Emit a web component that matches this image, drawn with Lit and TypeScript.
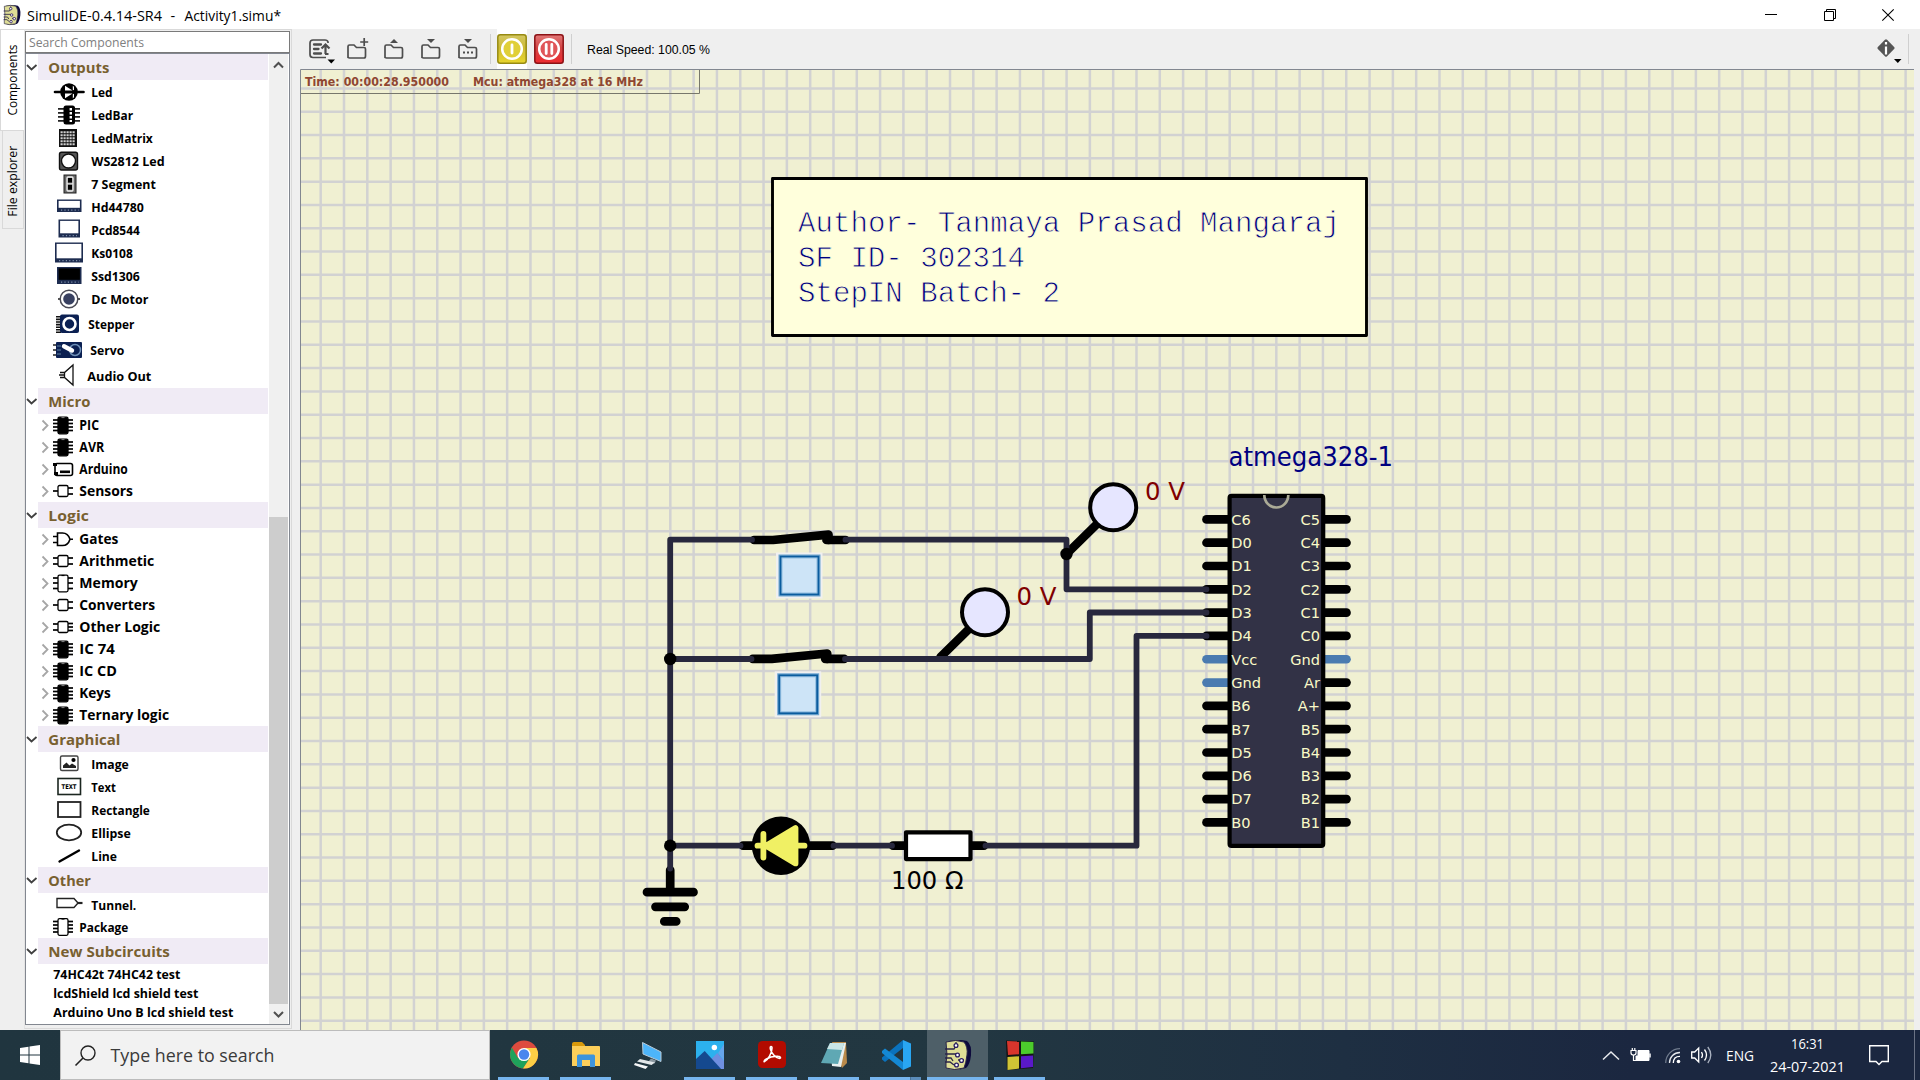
import { LitElement, html, svg, css, TemplateResult } from "lit";
import { customElement } from "lit/decorators.js";

type Icon = TemplateResult;

/* Single line of text with a fixed advance width. */
const label = (text: string, width: number, cls = "") => html`<svg
  class="label ${cls}" width=${width} height="16"><text x="-0.7" y=${cls === "big" ? 13.8 : cls === "node" ? 13.2 : 12.6}
  textLength=${width} lengthAdjust="spacingAndGlyphs">${text}</text></svg>`;

const chip = (hollow: boolean, left: number[], right: number[], tall = true): Icon => svg`
  <rect x="5" y=${tall ? 2.7 : 5} width="10" height=${tall ? 16.6 : 11} rx="1.5"
    fill=${hollow ? "#fff" : "#000"} stroke="#000" stroke-width="1.3"/>
  ${left.map((y) => svg`<path d="M0 ${y}H5" stroke="#000" stroke-width="1.7"/>`)}
  ${right.map((y) => svg`<path d="M15 ${y}H20" stroke="#000" stroke-width="1.7"/>`)}
  ${tall ? svg`<path d="M8.5 2.4h3v1.2h-3z" fill=${hollow ? "#000" : "#777"}/>` : ""}`;
const P4 = [5.5, 9, 12.5, 16];
const icChip = chip(false, P4, P4);

const lcd = (x: number, y: number, w: number, h: number, fill = "#fff"): Icon => svg`
  <rect x=${x} y=${y} width=${w} height=${h} fill="#1d2c50"/>
  <rect x=${x + 1.6} y=${y + 1.4} width=${w - 3.2} height=${h - 5.6} fill=${fill}/>
  <path d="M${x + 4} ${y + h - 1.8}H${x + w - 3}" stroke="#7f90ab" stroke-width="1.2" stroke-dasharray="1.2 2.2"/>`;

const icons: Record<string, Icon> = {
  led: svg`<path d="M2 11H30.500" stroke="#000" stroke-width="2.600" stroke-linecap="round"/><circle cx="16" cy="11" r="8.800"/>
    <path d="M12 4.800v4.700h7.500zM12 17.200v-4.700h7.500zM19.800 4.800l1.200.9v3.600l-1.200-.6zM19.800 17.200l1.200-.9v-3.600l-1.200.6z" fill="#fff"/>`,
  ledbar: svg`<path d="M5 4.8H27M5 8.8H27M5 12.8H27M5 16.8H27" stroke="#222" stroke-width="1.8"/>
    <rect x="10.5" y="1.5" width="11.5" height="19" rx="2.5"/><path d="M17.8 4V18" stroke="#fff" stroke-width="2.4" stroke-dasharray="2.4 1.6"/>`,
  matrix: svg`<rect x="6" y="2" width="18" height="18" fill="#111"/>
    <path d="M7.5 5.2h15M7.5 8.2h15M7.5 11.2h15M7.5 14.2h15M7.5 17.2h15" stroke="#d0d0d0" stroke-width="2.1" stroke-dasharray="2.2 .8"/>`,
  ws: svg`<rect x="6.5" y="2.2" width="18" height="17.8" rx="2" fill="#555" stroke="#111" stroke-width="1.4"/>
    <circle cx="15.5" cy="11" r="7" fill="#fff" stroke="#111" stroke-width="1.4"/>`,
  seg: svg`<rect x="11" y="2" width="12" height="18" fill="#6a6a6a" stroke="#222"/><rect x="14" y="4" width="6" height="14" rx="1" fill="none" stroke="#eee" stroke-width="1.3"/>
    <rect x="15" y="5" width="4" height="4.4"/><rect x="15" y="12" width="4" height="4.6"/><path d="M14 10.8h6" stroke="#eee"/>`,
  hd: lcd(4, 3.5, 24.5, 12.5),
  pcd: lcd(5.5, 0.5, 21.5, 18),
  ks: lcd(2, 0.5, 28, 20),
  ssd: lcd(4, 2, 24.5, 17, "#000"),
  dc: svg`<path d="M5 11H27" stroke="#555" stroke-width="2"/><circle cx="16" cy="11" r="8.8" fill="#fff" stroke="#4b4b55" stroke-width="1.5"/><circle cx="16" cy="11" r="5.8" fill="#384060"/>`,
  stepper: svg`<path d="M5.5 3v17" stroke="#111" stroke-width="5" stroke-dasharray="1.6 1"/><rect x="7" y="1.5" width="19" height="18.5" rx="2" fill="#0b2052"/>
    <circle cx="16.5" cy="11" r="6" fill="#0b2052" stroke="#fff" stroke-width="2.6"/>`,
  servo: svg`<path d="M0 6h4M0 11h4M0 16h4" stroke="#222" stroke-width="1.6"/><rect x="3" y="3" width="26" height="16" rx="1" fill="#0b2052"/>
    <path d="M4 7h4M4 11h4M4 15h4" stroke="#5e81a0"/><circle cx="22" cy="11" r="5.5" fill="none" stroke="#6f91b8" stroke-width="1.5"/><path d="M11 7.300L19 11.500" stroke="#fff" stroke-width="4.4" stroke-linecap="round" fill="none"/>`,
  audio: svg`<path d="M7 7.500h4.500l8.500-7.500v20l-8.500-7.500H7M6 10h5.500M11.500 7.500v5" fill="none" stroke="#111" stroke-width="1.3"/>`,
  ic: icChip,
  arduino: svg`<rect x="2" y="5" width="17.500" height="12" rx="2" fill="#fff" stroke="#000" stroke-width="1.6"/><path d="M0 6h4M1 15h4" stroke="#000" stroke-width="3"/><path d="M7 13.300h10" stroke="#000" stroke-width="2.600"/>`,
  sensors: chip(true, [10.5], [7.5, 13.5], false),
  gates: svg`<path d="M4.500 4.500h5c4 0 6.500 3 7.500 6.200-1 3.200-3.500 6.300-7.500 6.300h-5zM0 8h4.500M0 14h4.500M17 10.700h3" fill="none" stroke="#000" stroke-width="1.6"/>`,
  arith: chip(true, [7.5, 13.5], [7.5, 13.5], false),
  memory: chip(true, [5.5, 10.5, 16], [5.5, 10.5, 16]),
  conv: chip(true, [10.5], [7.5, 13.5], false),
  other: chip(true, [7.5, 13.5], [7, 10.5, 14], false),
  image: svg`<rect x="7.500" y="3" width="17.500" height="14.500" rx="1.500" fill="#fff" stroke="#444" stroke-width="1.4"/><path d="M10 15v-2.500l3.500-3 3 3 2.500-2 4 2.500v2z" fill="#222"/><circle cx="20.500" cy="7" r="2.100"/>`,
  text: svg`<rect x="5" y="2.500" width="22.500" height="16" fill="#fff" stroke="#1b2620" stroke-width="1.6"/><text x="8.500" y="13" font-size="6.500" font-weight="700" font-family="DejaVu Sans, sans-serif" textLength="15" lengthAdjust="spacingAndGlyphs">TEXT</text>`,
  rect: svg`<rect x="5" y="3" width="22.500" height="15" fill="#fff" stroke="#222" stroke-width="1.800"/>`,
  ellipse: svg`<ellipse cx="16" cy="10.500" rx="12.200" ry="7.800" fill="#fff" stroke="#222" stroke-width="1.800"/>`,
  line: svg`<path d="M6.500 16.500L26 5.500" stroke="#000" stroke-width="2.400" stroke-linecap="round"/>`,
  tunnel: svg`<path d="M4 4.500h17l4 4.500-4 4.500H4z" fill="#fff" stroke="#222" stroke-width="1.400"/><path d="M24 9h5.500" stroke="#222" stroke-width="2.200"/>`,
  pkg: chip(true, P4, P4),
};

interface Item { icon?: string; text: string; w: number; h: number; x: number; open?: boolean; }
interface Group { title: string; w: number; items: Item[]; }
const leaf = (icon: string, text: string, w: number, h = 23, x = 91.5): Item => ({ icon, text, w, h, x });
const node = (icon: string, text: string, w: number): Item => ({ icon, text, w, h: 22, x: 79.5, open: false });

const groups: Group[] = [
  { title: "Outputs", w: 61, items: [
    leaf("led", "Led", 21.3), leaf("ledbar", "LedBar", 41.7), leaf("matrix", "LedMatrix", 61.5), leaf("ws", "WS2812 Led", 73.3),
    leaf("seg", "7 Segment", 64.5), leaf("hd", "Hd44780", 52.5), leaf("pcd", "Pcd8544", 48.5), leaf("ks", "Ks0108", 41.5),
    leaf("ssd", "Ssd1306", 48.5), leaf("dc", "Dc Motor", 57), leaf("stepper", "Stepper", 46, 27, 89), leaf("servo", "Servo", 34, 26, 90.5),
    leaf("audio", "Audio Out", 64, 25, 88) ] },
  { title: "Micro", w: 42, items: [node("ic", "PIC", 19.7), node("ic", "AVR", 25), node("arduino", "Arduino", 48.5), node("sensors", "Sensors", 53.7)] },
  { title: "Logic", w: 40.5, items: [
    node("gates", "Gates", 39), node("arith", "Arithmetic", 75), node("memory", "Memory", 58.5), node("conv", "Converters", 75.7),
    node("other", "Other Logic", 81), node("ic", "IC 74", 35.5), node("ic", "IC CD", 37.5), node("ic", "Keys", 31.5), node("ic", "Ternary logic", 89.7) ] },
  { title: "Graphical", w: 72, items: [leaf("image", "Image", 37.5), leaf("text", "Text", 24.5), leaf("rect", "Rectangle", 58.5), leaf("ellipse", "Ellipse", 39.5), leaf("line", "Line", 25.7)] },
  { title: "Other", w: 42.5, items: [leaf("tunnel", "Tunnel.", 45), leaf("pkg", "Package", 49, 22, 79.5)] },
  { title: "New Subcircuits", w: 121.5, items: [
    { text: "74HC42t 74HC42 test", w: 127, h: 19, x: 53.5 }, { text: "lcdShield lcd shield test", w: 145, h: 19, x: 53.5 },
    { text: "Arduino Uno B lcd shield test", w: 180, h: 19, x: 53.5 } ] },
];

const simulLogo = (w: number, h: number) => html`<svg width=${w} height=${h} viewBox="0 0 28 30" preserveAspectRatio="none">
  <path d="M5 1q10-2 18 0 5 4 4 14t-5 13q-9 3-16 1z" fill="#0d0a3c"/>
  <path d="M2 2q10-3 18 0 4 5 3 13t-3 13q-10 3-18 0v-5l1-8z" fill="#dedd96" stroke="#2a2548" stroke-width="1"/>
  <path d="M1 9h9l2-3M1 14h11M1 18h6l2 3M1 22h5l4 3M14 20h6M12 2v2" stroke="#2a2548" stroke-width="1.300" fill="none"/>
  <g fill="#fff" stroke="#2a1c60" stroke-width="1.300"><circle cx="12" cy="5.500" r="1.900"/><circle cx="13.500" cy="15" r="1.900"/><circle cx="17.500" cy="20.500" r="1.900"/><circle cx="12.500" cy="25" r="1.900"/></g></svg>`;

const folder = (extra: Icon) => html`<svg class="tool" width="22" height="24" viewBox="0 0 22 24">
  <path d="M1 21V9.500q0-1.500 1.500-1.500H7l2.500 2.500H17q1.500 0 1.500 1.500v7q0 2-1.500 2H2.500Q1 21 1 19.500" fill="none" stroke="#4d4d4d" stroke-width="1.700"/>${extra}</svg>`;

const PITCH = 23.308;
const leftPins = ["C6", "D0", "D1", "D2", "D3", "D4", "Vcc", "Gnd", "B6", "B7", "D5", "D6", "D7", "B0"];
const rightPins = ["C5", "C4", "C3", "C2", "C1", "C0", "Gnd", "Ar", "A+", "B5", "B4", "B3", "B2", "B1"];
const power = new Set(["L6", "L7", "R6"]);

@customElement("circuit-view")
class CircuitView extends LitElement {
  static styles = css`
    :host { display: block; height: 961px; width: 1614px; }
    svg { display: block; }
    .lead { stroke: #000; stroke-width: 8.7; stroke-linecap: round; stroke-linejoin: round; fill: none; }
    .wire { stroke: #28283d; stroke-width: 5.8; stroke-linecap: round; stroke-linejoin: round; fill: none; }
    .power { stroke: #4a7bb0; }
    .pin { font: 14.6px "DejaVu Sans", sans-serif; fill: #fafac8; }
    .end { text-anchor: end; }
    .status { font: bold 12.4px "DejaVu Sans", sans-serif; fill: #8f4631; }
    .note { font: 29.2px "Liberation Mono", monospace; fill: #000080; stroke: #ffffdc; stroke-width: 0.8; white-space: pre; }
    .volt { font: 25px "DejaVu Sans Condensed", "DejaVu Sans", sans-serif; fill: #800000; }
    .ohm { fill: #000; }
    .name { font: 27px "DejaVu Sans Condensed", "DejaVu Sans", sans-serif; fill: #000080; }
  `;
  private toggle(dx: number, dy: number) {
    return svg`<g transform="translate(${dx} ${dy})">
      <path class="lead" d="M754 540H773L828.500 534.700V540"/>
      <path class="lead" d="M826.500 540H845.500"/>
      <rect x="776" y="552.500" width="46.500" height="46" fill="#f0f0f0"/>
      <rect x="779" y="555" width="41" height="41" fill="#cde4f7" stroke="#6da5d0" stroke-width="1"/>
      <rect x="782" y="558" width="35" height="35" fill="none" stroke="#8fbde0" stroke-width="1"/>
      <rect x="780.500" y="556.500" width="38" height="38" fill="none" stroke="#0a5c9e" stroke-width="2"/></g>`;
  }
  render() {
    const xs = Array.from({ length: 69 }, (_, i) => 320.7 + i * PITCH);
    const ys = Array.from({ length: 41 }, (_, i) => 88.4 + i * PITCH);
    return html`<svg width="1614" height="961" viewBox="300 69 1614 961">
      <rect x="300" y="69" width="1614" height="961" fill="#f0f0d2"/>
      <path d=${xs.map((x) => `M${x.toFixed(2)} 69V1030`).join("") + ys.map((y) => `M300 ${y.toFixed(2)}H1914`).join("")} stroke="#d2d2d2" stroke-width="2.500"/>
      <path d="M300.500 1030V69.500H1914" fill="none" stroke="#828790"/>
      <path d="M301 93.500H699.500V70" fill="none" stroke="#77776c"/>
      <text class="status" x="305" y="86" textLength="144" lengthAdjust="spacingAndGlyphs">Time: 00:00:28.950000</text>
      <text class="status" x="473" y="86" textLength="170" lengthAdjust="spacingAndGlyphs">Mcu: atmega328 at 16 MHz</text>

      <rect x="772.500" y="178.500" width="594" height="157" fill="#ffffdc" stroke="#000" stroke-width="2.900" stroke-linejoin="round"/>
      <text class="note" x="798" y="231.800" textLength="542" lengthAdjust="spacingAndGlyphs">Author- Tanmaya Prasad Mangaraj</text>
      <text class="note" x="798" y="266.800" textLength="227" lengthAdjust="spacingAndGlyphs">SF ID- 302314</text>
      <text class="note" x="798" y="301.800" textLength="262" lengthAdjust="spacingAndGlyphs">StepIN Batch- 2</text>

      ${this.toggle(0, 0)}${this.toggle(-1.3, 118.8)}
      <path class="lead" d="M1066.500 554L1096 525M940.500 657L970 628"/>
      <circle cx="1113.200" cy="507.300" r="23" fill="#e6e6ff" stroke="#000" stroke-width="4"/>
      <circle cx="985" cy="612.300" r="23" fill="#e6e6ff" stroke="#000" stroke-width="4"/>
      <path class="lead" d="M743 845.700H755M810 845.700H832.500M893 845.700H905M971 845.700H984M670.200 870V890M647 892.200H693.500M655.500 906.800H684.700M664.300 921.400H676.200"/>
      ${leftPins.map((p, i) => svg`<path class="lead ${power.has("L" + i) ? "power" : ""}" d="M1206.500 ${519.4 + i * PITCH}H1229"/>`)}
      ${rightPins.map((p, i) => svg`<path class="lead ${power.has("R" + i) ? "power" : ""}" d="M1323 ${519.4 + i * PITCH}H1346.500"/>`)}
      <path class="wire" d="M752 539.700H670.200V868.500M670.200 659H751.500M670.200 845.700H740.500M845.500 539.700H1066.500V589.300H1206.500M845 659H1089.800V612.500H1206.500M833.500 845.700H892M985.500 845.700H1136.500V635.900H1206.500"/>
      <circle cx="670.200" cy="659" r="6.200"/><circle cx="670.200" cy="845.700" r="6.200"/><circle cx="1066.500" cy="554" r="6.200"/>

      <circle cx="781" cy="845.700" r="29.200"/>
      <path d="M757.500 845.700H804.500M763.400 834V857.500M766 845.700L795.500 828V863.400Z" fill="#f0f064" stroke="#f0f064" stroke-width="5.800" stroke-linecap="round" stroke-linejoin="round"/>
      <rect x="906" y="832.300" width="64.500" height="26.800" fill="#fff" stroke="#000" stroke-width="4.200" stroke-linejoin="round"/>

      <rect x="1229.600" y="495.900" width="93.600" height="350" rx="2" fill="#323246" stroke="#000" stroke-width="4.200"/>
      <path d="M1264.300 495a12 12.500 0 0 0 24 0" fill="none" stroke="#aaaa96" stroke-width="2.700"/>
      ${leftPins.map((p, i) => svg`<text class="pin" x="1231.300" y=${524.8 + i * PITCH}>${p}</text>`)}
      ${rightPins.map((p, i) => svg`<text class="pin end" x="1320" y=${524.8 + i * PITCH}>${p}</text>`)}
      <text class="name" x="1228.500" y="466.200" textLength="164.500" lengthAdjust="spacingAndGlyphs">atmega328-1</text>
      <text class="volt" x="1145" y="500.300" textLength="40" lengthAdjust="spacingAndGlyphs">0 V</text>
      <text class="volt" x="1016.500" y="605.100" textLength="40" lengthAdjust="spacingAndGlyphs">0 V</text>
      <text class="volt ohm" x="891" y="888.600" textLength="72.500" lengthAdjust="spacingAndGlyphs">100 Ω</text>
    </svg>`;
  }
}

@customElement("component-tree")
class ComponentTree extends LitElement {
  static styles = css`
    :host { display: flex; width: 265px; height: 972px; box-sizing: border-box; border: 1px solid #828790; background: #fff; font-family: "Open Sans", "Noto Sans", sans-serif; }
    .list { width: 243px; overflow: hidden; }
    .head { display: flex; align-items: center; height: 26px; }
    .twist { width: 12px; flex: none; }
    .title { flex: 1; height: 26px; margin-right: 1px; background: #f0ebf5; padding-left: 10.5px; display: flex; align-items: center; }
    .row { display: flex; align-items: center; }
    .slot { flex: none; display: flex; align-items: center; justify-content: flex-end; height: 100%; }
    .arrow { width: 12px; margin-right: 2.5px; }
    .icon { overflow: visible; flex: none; }
    .label { overflow: visible; font-weight: 700; font-size: 12.8px; fill: #000; }
    .node { font-size: 13.4px; }
    .big { font-size: 15px; fill: #786030; }
    .bar { width: 19px; margin-left: auto; background: #f0f0f0; display: flex; flex-direction: column; align-items: center; margin-right: 1px; }
    .track { height: 463px; flex: none; }
    .thumb { width: 19px; height: 487px; background: #cdcdcd; }
  `;
  render() {
    return html`<div class="list">${groups.map((g) => html`
        <div class="head">
          <svg class="twist" width="12" height="26"><path d="M1 11L5.500 15.500L10.500 11" fill="none" stroke="#404040" stroke-width="1.800"/></svg>
          <div class="title">${label(g.title, g.w, "big")}</div>
        </div>
        ${g.items.map((it) => html`<div class="row" style="height:${it.h}px">
          <div class="slot" style="width:${it.x - 26}px">
            ${it.icon ? html`
              ${it.open === false ? html`<svg class="arrow" width="12" height="16"><path d="M3.500 3.500L8.500 8.500L3.500 13.500" fill="none" stroke="#a6a6a6" stroke-width="1.800"/></svg>` : ""}
              <svg class="icon" width=${it.x - 53} height="22">${it.open === false ? svg`<g transform="translate(0 .5)">${icons[it.icon]}</g>` : icons[it.icon]}</svg>` : ""}
          </div>
          ${label(it.text, it.w, it.open === false ? "node" : "")}
        </div>`)}`)}
      </div>
      <div class="bar">
        <svg class="track" width="19" height="463"><path d="M5 13.500L9.500 9L14 13.500" fill="none" stroke="#505050" stroke-width="2"/></svg>
        <div class="thumb"></div>
        <svg width="19" height="20"><path d="M5 8L9.500 12.500L14 8" fill="none" stroke="#505050" stroke-width="2"/></svg>
      </div>`;
  }
}

const apps: { icon: TemplateResult; state: string }[] = [
  { state: "run", icon: html`<svg width="28" height="29" viewBox="0 0 28 29"><circle cx="14" cy="14.500" r="14" fill="#dd4b3e"/><path d="M1.900 7.500A14 14 0 0 0 13 28.500L20 18 14 14.500 8 18z" fill="#1fa25b"/><path d="M14 8H26.400A14 14 0 0 1 13 28.500L20 18z" fill="#fdcf45"/><circle cx="14" cy="14.500" r="6.600" fill="#fff"/><circle cx="14" cy="14.500" r="5.200" fill="#4a86ee"/></svg>` },
  { state: "run", icon: html`<svg width="28" height="26" viewBox="0 0 28 26"><path d="M0 2q0-2 2-2h8l3 3v5H0z" fill="#d99a0b"/><path d="M0 4h27q1 0 1 1v19H0z" fill="#fccf5a"/><path d="M5 25V14q0-1.500 1.500-1.500h15Q23 12.500 23 14v11h-5v-7h-8v7z" fill="#3d94dc"/></svg>` },
  { state: "", icon: html`<svg width="28" height="28" viewBox="0 0 28 28"><path d="M8.500 1.500l18.500 9.500v9.500L9 13z" fill="#4db5fa" stroke="#b9cad6"/><path d="M17 17.500l5 2-1.500 3-6-2z" fill="#8b98a0"/><path d="M6 18l15 3.500-3.500 2.500L3 20.500z" fill="#e3e8ea"/><path d="M1 22l13 3.500-2.500 2.500L0 24z" fill="#f5f7f8"/></svg>` },
  { state: "run", icon: html`<svg width="28" height="28" viewBox="0 0 29 28" preserveAspectRatio="none"><rect width="29" height="28" fill="#2cb1ee"/><path d="M14 20l8-8 7 8v8H14z" fill="#6f8fe0"/><path d="M0 18L9 10 26 28H0z" fill="#15498f"/><path d="M29 3v17l-6-8z" fill="#8d9be8" opacity=".6"/><circle cx="19" cy="6.500" r="2.800" fill="#fff"/></svg>` },
  { state: "run", icon: html`<svg width="28" height="27" viewBox="0 0 28 27"><rect width="28" height="27" rx="4.500" fill="#b30b00"/><path d="M6.500 20.500c3.500-1.500 7.500-8.500 7.500-13.500 0-2.300-2.300-2-1.700.8 1.200 4.700 5 8.700 8.700 9.500 2.300.3 1.800-2-.8-2-4-.2-9.200 1-12.200 2.900-2 1.300-2.300 2.700-1.500 2.300z" fill="none" stroke="#fff" stroke-width="1.600"/></svg>` },
  { state: "run", icon: html`<svg width="28" height="28" viewBox="0 0 28 28"><path d="M12 1h14l1 21-5 5z" fill="#b98a4b"/><path d="M10 2h16l-5 24-9-1z" fill="#e8f0f0"/><path d="M10 2h14l-6 21L1 22z" fill="#5fa8b4"/><path d="M10 2h14l-2 7-15-1z" fill="#c9e5e6"/></svg>` },
  { state: "multi", icon: html`<svg width="30" height="30" viewBox="0 0 30 30"><path d="M22 0v8L4 22l-3-2.500v-2z" fill="#0a72bd"/><path d="M22 30v-8L4 8.500 1 11v2z" fill="#1488d4"/><path d="M22 0l8 3.500v23L22 30z" fill="#29a6f2"/></svg>` },
  { state: "run active", icon: simulLogo(28, 30) },
  { state: "run", icon: html`<svg width="28" height="30" viewBox="0 0 28 30"><path d="M0 .5l28 1-1 26.500L1 30z" fill="#141414"/><path d="M1 1l12 .5v12.800L2 15z" fill="#d7352c"/><path d="M15 1.500l12.500.5v11.500l-12.500.8z" fill="#4ccb2c"/><path d="M1.500 17l11.500-.7v12.200L1.500 30z" fill="#cfc535"/><path d="M15 16.200l12-.8v11.600l-12 1.300z" fill="#5a19c9"/></svg>` },
];

@customElement("task-bar")
class TaskBar extends LitElement {
  static styles = css`
    :host { display: flex; height: 50px; background: linear-gradient(90deg, #20353f 0%, #223741 50%, #1e2f42 70%, #1b2740 85%, #1b2740 100%); font-family: "Open Sans", "Noto Sans", sans-serif; }
    svg { display: block; overflow: visible; }
    .start { width: 60px; display: flex; align-items: center; justify-content: center; }
    .search { width: 430px; box-sizing: border-box; border: 1px solid #bcbcbc; background: #f2f2f2; display: flex; align-items: center; padding-left: 14px; gap: 14px; }
    .find { font-size: 18.5px; fill: #3a3a3a; }
    .apps { display: flex; padding-left: 3px; gap: 1px; }
    .app { width: 61px; display: flex; flex-direction: column; align-items: center; }
    .face { height: 47px; display: flex; align-items: center; padding-top: 2px; box-sizing: border-box; }
    .active { background: #4e5f68; }
    .line { height: 3px; width: 51px; }
    .run .line { background: #76b5ee; }
    .active .line { width: 61px; }
    .multi .line { background: linear-gradient(90deg, #76b5ee 40px, #3a5a78 40px, #5b8cba 41px); }
    .tray { margin-left: auto; display: flex; align-items: center; color: #fff; }
    .tray text { fill: #fff; font-size: 15px; }
    .clock { display: flex; flex-direction: column; align-items: center; gap: 7px; width: 76px; margin: 0 24px 0 15px; }
    .edge { width: 1px; height: 50px; background: #6b7385; margin-left: 25px; margin-right: 5px; }
    .up { margin-right: 12px; }
    .battery { margin-right: 14px; }
    .wifi { margin-right: 11px; }
    .sound { margin-right: 14px; }
  `;
  render() {
    return html`
      <div class="start"><svg width="20" height="20" viewBox="0 0 20 20"><path d="M0 3L8.500 1.700V9.500H0zM9.500 1.500L20 0v9.500H9.500zM0 10.500h8.500v7.800L0 17zM9.500 10.500H20V20L9.500 18.500z" fill="#fff"/></svg></div>
      <div class="search">
        <svg width="21" height="21" viewBox="0 0 21 21"><circle cx="13" cy="8" r="7" fill="none" stroke="#222" stroke-width="1.400"/><path d="M8 13L.5 20.500" stroke="#222" stroke-width="1.600"/></svg>
        <svg width="164" height="20"><text class="find" x="0.500" y="17" textLength="164" lengthAdjust="spacingAndGlyphs">Type here to search</text></svg>
      </div>
      <div class="apps">${apps.map((a) => html`<div class="app ${a.state}"><div class="face">${a.icon}</div><div class="line"></div></div>`)}</div>
      <div class="tray">
        <svg class="up" width="16" height="9"><path d="M0 8.500L8 1L16 8.500" fill="none" stroke="#e8eaee" stroke-width="1.500"/></svg>
        <svg class="battery" width="20" height="14"><path d="M0 2.500h5v2.500q0 2-2.500 2T0 5zM1.300 2.500V0M3.800 2.500V0M2.500 7v5.500h3" stroke="#fff" stroke-width="1.200" fill="none"/><path d="M7 2.500h11v10H5V8h2z" fill="#fff" stroke="#fff"/><path d="M19 5.500v4" stroke="#fff" stroke-width="1.500"/></svg>
        <svg class="wifi" width="15" height="15"><g fill="none" stroke-width="1.300"><path d="M.7 15C.7 7 7 .7 15 .7" stroke="#6f7a8c"/><path d="M4.500 15C4.500 9 9 4.500 15 4.500" stroke="#e8eaee"/><path d="M8.300 15q0-6.700 6.700-6.700" stroke="#fff"/></g><circle cx="13.500" cy="13.500" r="1.800" fill="#fff"/></svg>
        <svg class="sound" width="21" height="18"><path d="M.7 6h3l4-4v14l-4-4h-3z" fill="none" stroke="#fff" stroke-width="1.300"/><path d="M10.500 6q2 3 0 6M13.500 3.500q4 5.500 0 11" stroke="#fff" stroke-width="1.300" fill="none"/><path d="M16.800 1q6 8 0 16" stroke="#aab2c0" stroke-width="1.300" fill="none"/></svg>
        <svg width="28" height="16"><text x="0" y="14" textLength="28" lengthAdjust="spacingAndGlyphs">ENG</text></svg>
        <div class="clock">
          <svg width="33" height="16"><text x="0" y="13" textLength="33" lengthAdjust="spacingAndGlyphs">16:31</text></svg>
          <svg width="75" height="16"><text x="0" y="13" textLength="75" lengthAdjust="spacingAndGlyphs">24-07-2021</text></svg>
        </div>
        <svg width="20" height="20"><path d="M.7 .7H19.300V16.500H13L10 19.500L7 16.500H.7z" fill="none" stroke="#fff" stroke-width="1.400"/></svg>
        <div class="edge"></div>
      </div>`;
  }
}

@customElement("app-root")
class AppRoot extends LitElement {
  static styles = css`
    :host { display: flex; flex-direction: column; width: 1920px; height: 1080px; overflow: hidden; background: #efefef; font-family: "Open Sans", "Noto Sans", sans-serif; }
    svg { display: block; overflow: visible; }
    .titlebar { height: 29px; background: #fff; display: flex; align-items: center; padding-left: 3px; flex: none; box-sizing: border-box; }
    .caption { margin-left: 6px; font-size: 14.6px; }
    .winbtns { margin-left: auto; margin-right: 26px; display: flex; gap: 46.5px; }
    .body { display: flex; height: 1001px; flex: none; }
    .tabs { width: 24px; flex: none; }
    .tab { box-sizing: border-box; border: 1px solid #d9d9d9; display: flex; align-items: center; justify-content: center; }
    .on { height: 102px; background: #fff; border-right: 0; }
    .off { height: 98px; margin-left: 2px; background: #efefef; border-top: 0; }
    .tab text { font-size: 13.2px; }
    .panel { width: 268px; box-sizing: border-box; border: 1px solid #d9d9d9; border-left-color: #e4e4e4; padding: 1px 0 0 0; height: 1000px; flex: none; }
    .search { height: 22px; width: 265px; box-sizing: border-box; border: 1px solid #7a7a7a; background: #fff; padding-left: 3px; display: flex; align-items: center; }
    .search text { font-size: 12.6px; fill: #808080; }
    .main { flex: 1; padding-left: 8px; }
    .toolbar { height: 40px; display: flex; align-items: center; padding-left: 8px; }
    .tools { display: flex; gap: 15px; align-items: center; }
    .sep { width: 1px; height: 30px; background: #cfcfcf; }
    .first { margin: 0 6px 0 10px; }
    .second { margin: 0 15px 0 7px; }
    .pause { margin-left: 7px; }
    .speed text { font-size: 12.5px; font-family: "Liberation Sans", Arial, sans-serif; }
    .info { margin-left: auto; margin-right: 8px; }
    .endsep { margin-right: 11px; }
  `;
  private power(kind: "on" | "pause") {
    const red = kind === "pause";
    return html`<svg class=${kind} width="30" height="30" viewBox="0 0 30 30">
      <defs><linearGradient id="grad-${kind}" x1="0" y1="0" x2="0" y2="1">
        <stop offset="0" stop-color=${red ? "#e27878" : "#d3c763"}/><stop offset=".45" stop-color=${red ? "#d24444" : "#cdbb35"}/><stop offset="1" stop-color=${red ? "#ee2a30" : "#e8d52c"}/></linearGradient></defs>
      <rect x=".8" y=".8" width="28.400" height="28.400" rx="2.500" fill="url(#grad-${kind})" stroke=${red ? "#8c1216" : "#978a12"} stroke-width="1.500"/>
      <circle cx="15" cy="15" r="9.800" fill=${red ? "#e05558" : "#e0cf38"} stroke="#fff" stroke-width="2.500"/>
      <path d=${red ? "M12.200 10.500v9M17.800 10.500v9" : "M15 11v8"} stroke="#fff" stroke-width="2.800" stroke-linecap="round"/></svg>`;
  }
  render() {
    return html`
      <div class="titlebar">
        ${simulLogo(18, 20)}
        <svg class="caption" width="254" height="18">
          <text x="0" y="14.500" textLength="135" lengthAdjust="spacingAndGlyphs">SimulIDE-0.4.14-SR4</text>
          <text x="143.500" y="14.500">-</text>
          <text x="157.500" y="14.500" textLength="96.500" lengthAdjust="spacingAndGlyphs">Activity1.simu*</text></svg>
        <div class="winbtns">
          <svg width="12" height="12"><path d="M0 5.500H12" stroke="#000"/></svg>
          <svg width="12" height="12"><path d="M.5 2.500h9v9h-9zM2.500 2.500V.5h9v9h-2" fill="none" stroke="#000"/></svg>
          <svg width="12" height="12"><path d="M.3 .3L11.700 11.700M11.700 .3L.3 11.700" stroke="#000" stroke-width="1.100"/></svg>
        </div>
      </div>
      <div class="body">
        <div class="tabs">
          <div class="tab on"><svg width="16" height="72"><text transform="translate(12.300 71.500) rotate(-90)" textLength="71" lengthAdjust="spacingAndGlyphs">Components</text></svg></div>
          <div class="tab off"><svg width="16" height="72"><text transform="translate(11.500 72.700) rotate(-90)" textLength="71" lengthAdjust="spacingAndGlyphs">File explorer</text></svg></div>
        </div>
        <div class="panel">
          <div class="search"><svg width="115" height="16"><text x="0" y="12.500" textLength="115" lengthAdjust="spacingAndGlyphs">Search Components</text></svg></div>
          <component-tree></component-tree>
        </div>
        <div class="main">
          <div class="toolbar">
            <div class="tools">
              <svg width="24" height="24" viewBox="0 0 24 24"><path d="M20 6V5Q19.500 3 17 3H5Q2 3 2 6v11.500q0 3 3 3h13" fill="none" stroke="#4d4d4d" stroke-width="1.700"/><path d="M6 7.500H13M6 12H10.500M6 16.500H13" stroke="#4d4d4d" stroke-width="2.300" stroke-linecap="round"/><path d="M17.500 17V8M13.500 11.500l4-4 4 4M17 17h3.500" stroke="#4d4d4d" stroke-width="2.200" fill="none"/><path d="M19.500 22.500h7.500l-3.700 4z" fill="#000"/></svg>
              ${folder(svg`<path d="M17.200 1v8M13.200 5h8" stroke="#efefef" stroke-width="4"/><path d="M17.200 1v8M13.200 5h8" stroke="#4d4d4d" stroke-width="1.700"/>`)}
              ${folder(svg`<path d="M6 6l4-4 4 4z" fill="#4d4d4d"/>`)}
              ${folder(svg`<path d="M6 2h8l-4 4z" fill="#4d4d4d"/>`)}
              ${folder(svg`<path d="M6 2h8l-4 4z" fill="#4d4d4d"/><path d="M5 15.500h11" stroke="#4d4d4d" stroke-width="2" stroke-dasharray="2 2"/>`)}
            </div>
            <div class="sep first"></div>
            ${this.power("on")}${this.power("pause")}
            <div class="sep second"></div>
            <svg class="speed" width="123" height="16"><text x="0" y="13" textLength="123" lengthAdjust="spacingAndGlyphs">Real Speed: 100.05 %</text></svg>
            <svg class="info" width="24" height="24" viewBox="0 0 24 24"><rect x="3.500" y="4.500" width="13" height="13" rx="1.500" transform="rotate(45 10 11)" fill="#555"/><path d="M10 9.500v8M10 5v2.500" stroke="#fff" stroke-width="2.200"/><path d="M18 22h7.500l-3.700 4z" fill="#000"/></svg>
            <div class="sep endsep"></div>
          </div>
          <circuit-view></circuit-view>
        </div>
      </div>
      <task-bar></task-bar>`;
  }
}
